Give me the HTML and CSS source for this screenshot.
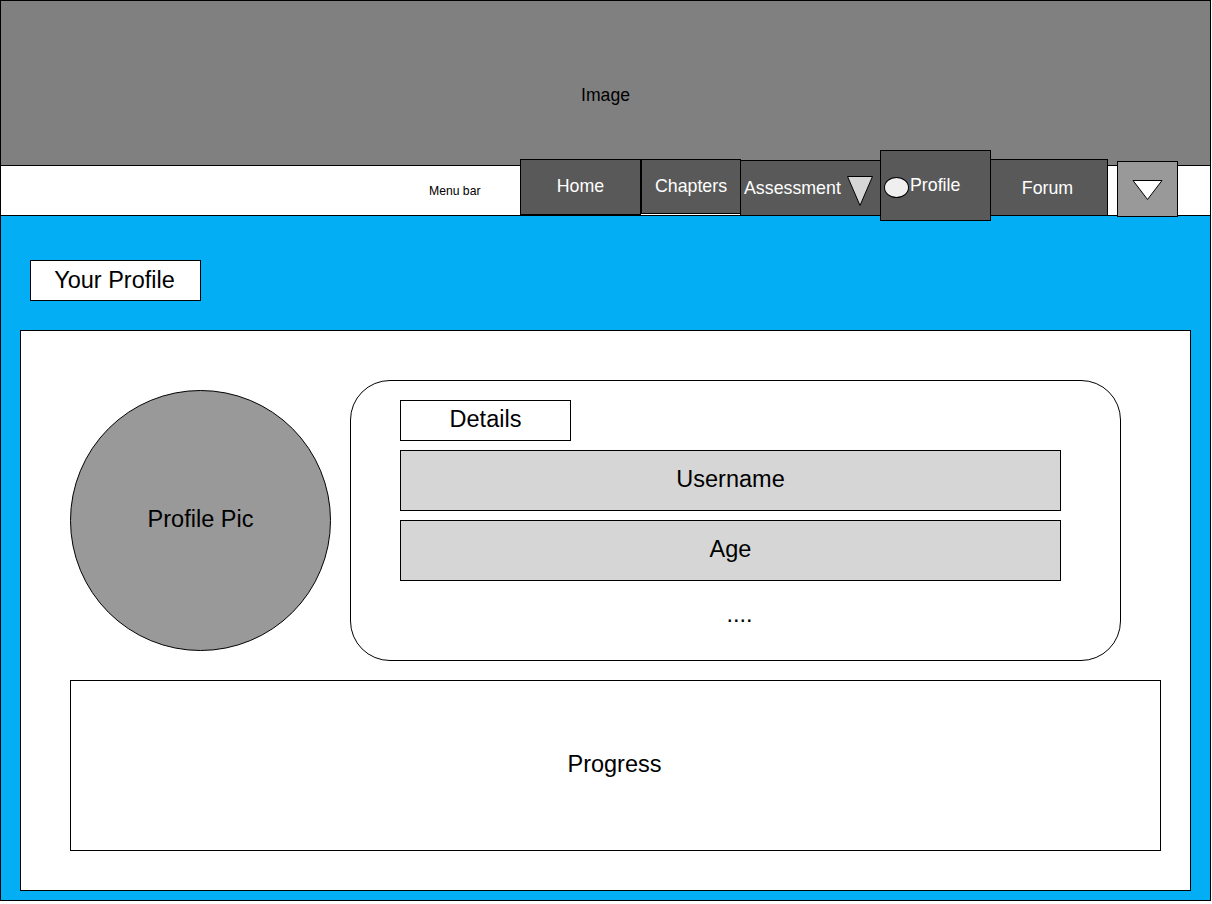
FILE: index.html
```html
<!DOCTYPE html>
<html>
<head>
<meta charset="utf-8">
<title>Profile wireframe</title>
<link rel="stylesheet" href="styles.css">
</head>
<body>
<div class="page">
  <header class="hero">Image</header>
  <nav class="menubar">
    <span class="menu-label">Menu bar</span>
    <a class="tab tab-home">Home</a>
    <a class="tab tab-chapters">Chapters</a>
    <a class="tab tab-assess">Assessment
      <svg class="tri" width="28" height="32" viewBox="0 0 28 32"><polygon points="1.5,1.5 26.5,1.5 14,30.5" fill="#d6d6d6" stroke="#000" stroke-width="1"/></svg>
    </a>
    <a class="tab tab-profile"><span class="dot"></span>Profile</a>
    <a class="tab tab-forum">Forum</a>
    <a class="tab tab-drop">
      <svg width="31" height="22" viewBox="0 0 31 22"><polygon points="1,1.5 30,1.5 15.5,20.5" fill="#fff" stroke="#000" stroke-width="1"/></svg>
    </a>
  </nav>
  <main class="content">
    <div class="title-box">Your Profile</div>
    <section class="panel">
      <div class="row">
        <div class="avatar">Profile Pic</div>
        <div class="details">
          <div class="details-label">Details</div>
          <div class="field">Username</div>
          <div class="field">Age</div>
          <div class="more">....</div>
        </div>
      </div>
      <div class="progress">Progress</div>
    </section>
  </main>
</div>
</body>
</html>
```

FILE: styles.css
```css
* { box-sizing: border-box; }
html, body { margin: 0; padding: 0; background: #fff; }
body { font-family: "Liberation Sans", Arial, sans-serif; color: #000; }

.page { width: 1211px; }

.hero {
  height: 166px;
  background: #808080;
  border: 1px solid #000;
  display: flex;
  align-items: center;
  justify-content: center;
  font-size: 17.6px;
  padding-top: 24px;
}

.menubar {
  height: 49px;
  background: #fff;
  border-left: 1px solid #000;
  border-right: 1px solid #000;
  display: flex;
  align-items: flex-start;
}

.menu-label {
  margin-left: 428px;
  width: 91px;
  height: 49px;
  display: flex;
  align-items: center;
  padding-top: 0;
  font-size: 12.2px;
}

.tab {
  position: relative;
  z-index: 2;
  background: #595959;
  border: 1px solid #000;
  color: #fff;
  font-size: 17.8px;
  display: flex;
  align-items: center;
  justify-content: center;
  flex: none;
}

.tab-home { width: 121px; height: 56px; margin-top: -7px; padding-bottom: 2px; }
.tab-chapters { width: 100px; height: 55px; margin-top: -7px; }
.tab-assess {
  width: 141px; height: 56px; margin-top: -6px; margin-left: -1px;
  justify-content: flex-start;
  padding-left: 3px;
  padding-top: 1px;
}
.tab-assess .tri { margin-left: 5px; margin-top: 4px; }
.tab-profile {
  width: 111px; height: 71px; margin-top: -16px; margin-left: -1px;
  justify-content: flex-start;
  padding-left: 3px;
  z-index: 3;
}
.dot {
  display: inline-block;
  width: 25px;
  height: 21px;
  border-radius: 50%;
  background: #efefef;
  border: 1px solid #000;
  margin-top: 4px;
  margin-right: 1px;
}
.tab-forum { width: 118px; height: 57px; margin-top: -7px; margin-left: -1px; padding-top: 1px; padding-right: 3px; }
.tab-drop {
  width: 61px; height: 56px; margin-top: -5px; margin-left: 9px;
  background: #999;
  padding-top: 2px;
}

.content {
  height: 686px;
  background: #03aef5;
  border: 1px solid #000;
  padding: 44px 0 0 29px;
}

.title-box {
  width: 171px;
  height: 41px;
  background: #fff;
  border: 1px solid #000;
  display: flex;
  align-items: center;
  justify-content: center;
  font-size: 23.5px;
  padding-right: 2px;
}

.panel {
  width: 1171px;
  height: 561px;
  margin: 29px 0 0 -10px;
  background: #fff;
  border: 1px solid #000;
  padding: 49px 0 0 49px;
}

.row {
  display: flex;
  align-items: flex-start;
  gap: 19px;
}

.avatar {
  width: 261px;
  height: 261px;
  margin-top: 10px;
  border-radius: 50%;
  background: #999;
  border: 1px solid #000;
  display: flex;
  align-items: center;
  justify-content: center;
  font-size: 23.5px;
  padding-bottom: 2px;
}

.details {
  width: 771px;
  height: 281px;
  border: 1px solid #000;
  border-radius: 40px;
  padding: 19px 0 0 49px;
}

.details-label {
  width: 171px;
  height: 41px;
  border: 1px solid #000;
  display: flex;
  align-items: center;
  justify-content: center;
  font-size: 23.5px;
  padding-bottom: 2px;
}

.field {
  width: 661px;
  height: 61px;
  margin-top: 9px;
  background: #d6d6d6;
  border: 1px solid #000;
  display: flex;
  align-items: center;
  justify-content: center;
  font-size: 23.5px;
  padding-bottom: 2px;
}

.more {
  width: 661px;
  margin-top: 20px;
  padding-left: 18px;
  text-align: center;
  font-size: 23.5px;
  line-height: 27px;
}

.progress {
  width: 1091px;
  height: 171px;
  margin-top: 19px;
  border: 1px solid #000;
  display: flex;
  align-items: center;
  justify-content: center;
  font-size: 23.5px;
  padding: 0 2px 2px 0;
}
```
